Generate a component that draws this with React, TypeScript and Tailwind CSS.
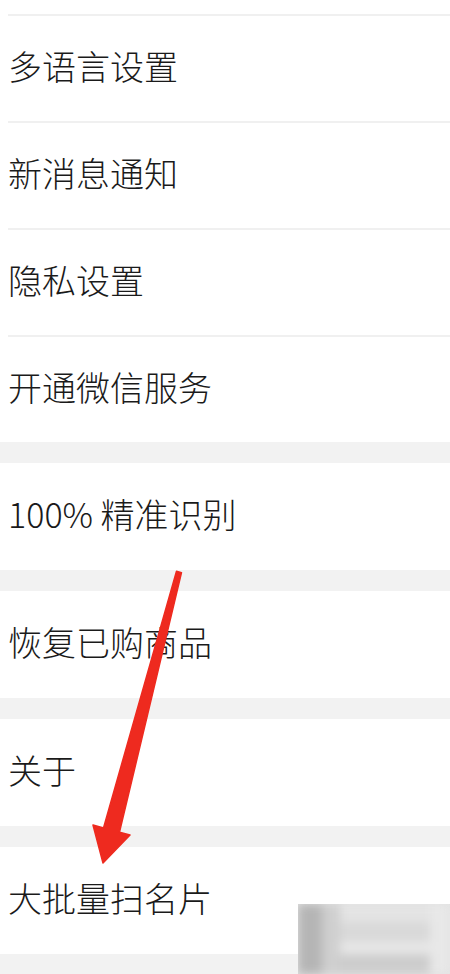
import React from 'react';

const groups: string[][] = [
  ['多语言设置', '新消息通知', '隐私设置', '开通微信服务'],
  ['100% 精准识别'],
  ['恢复已购商品'],
  ['关于'],
  ['大批量扫名片'],
];

const Row = ({ label, divider }: { label: string; divider: boolean }) => (
  <div className="bg-white">
    {divider && <div className="ml-2 h-[2px] bg-[#f0f0f0]" />}
    <div className={`${divider ? 'h-[105px]' : 'h-[107px]'} flex items-center pb-[6px] pl-2`}>
      <span className="text-[34px] font-light leading-none text-[#1a1a1a]">{label}</span>
    </div>
  </div>
);

export default function App() {
  return (
    <div
      className="relative h-[974px] w-[450px] overflow-hidden bg-[#f2f2f2]"
      style={{ fontFamily: '"Noto Sans CJK SC", "Noto Sans", sans-serif' }}
    >
      <div className="h-[14px] bg-white" />
      {groups.map((items, gi) => (
        <div key={gi} className={gi > 0 ? 'mt-[21px]' : ''}>
          {items.map((label) => (
            <Row key={label} label={label} divider={gi === 0} />
          ))}
        </div>
      ))}

      {/* red annotation arrow */}
      <svg className="pointer-events-none absolute left-0 top-0" width="450" height="974" viewBox="0 0 450 974">
        <polygon
          points="176.5,571.3 181.5,572.7 119.5,832.1 130,835 103,863 93,825 103.5,827.9"
          fill="#ee2a1f"
          stroke="#ee2a1f"
          strokeWidth="1.5"
          strokeLinejoin="round"
        />
      </svg>

      {/* blurred watermark */}
      <div className="absolute left-[298px] top-[904px] h-[70px] w-[152px] overflow-hidden bg-[#e2e2e2]">
        <div className="flex h-full blur-[5px]">
          <div className="w-[24px] bg-[#b5b5b5]" />
          <div className="w-[18px] bg-[#cfcfcf]" />
          <div className="flex flex-1 flex-col">
            <div className="h-[18px] bg-[#e4e4e4]" />
            <div className="h-[20px] bg-[#d9d9d9]" />
            <div className="h-[12px] bg-[#e8e8e8]" />
            <div className="flex-1 bg-[#cdcdcd]" />
          </div>
          <div className="w-[20px] bg-[#e8e8e8]" />
        </div>
      </div>
    </div>
  );
}
